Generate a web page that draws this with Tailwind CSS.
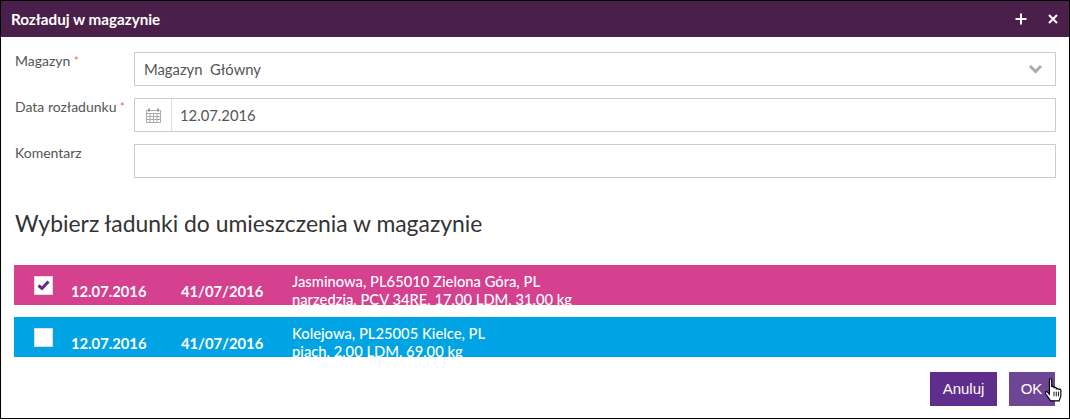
<!DOCTYPE html>
<html lang="pl">
<head>
  <meta charset="UTF-8">
  <title>Rozładuj w magazynie</title>
  <script src="https://cdn.jsdelivr.net/npm/@tailwindcss/browser@4"></script>
</head>
<body class="bg-white overflow-hidden">
  <div class="relative w-[1070px] h-[419px] border border-black font-['Lato',sans-serif] text-[#555] bg-white overflow-hidden">
    <!-- Naglowek -->
    <div class="h-9 bg-[#4a1f4a] flex items-center justify-between pl-[10px] pr-[11px] text-white">
      <h1 class="text-[15.200px] font-bold">Rozładuj w magazynie</h1>
      <div class="flex items-center gap-[21px]">
        <svg width="12" height="12" viewBox="0 0 12 12"><path d="M6 0.500v11M0.500 6h11" stroke="#fff" stroke-width="2"/></svg>
        <svg width="10" height="10" viewBox="0 0 10 10"><path d="M1 1l8 8M9 1l-8 8" stroke="#fff" stroke-width="2"/></svg>
      </div>
    </div>

    <!-- Formularz -->
    <div class="pl-[13px] pr-[13px] pt-[15px]">
      <div class="flex h-[34px]">
        <label class="w-[120px] pl-[1px] text-sm leading-4 pt-[1px]">Magazyn <span class="text-[#f55] text-[11px] align-top">*</span></label>
        <div class="flex-1 border border-[#ccc] flex items-center justify-between pl-[9px] pr-[12px] text-[14.800px]">
          <span class="whitespace-pre">Magazyn  Główny</span>
          <svg width="15" height="10" viewBox="0 0 15 10"><path d="M2 2l5.500 5.500L13 2" fill="none" stroke="#aaa" stroke-width="3"/></svg>
        </div>
      </div>
      <div class="flex h-[34px] mt-[12px]">
        <label class="w-[120px] pl-[1px] text-sm leading-4 pt-[1px] whitespace-nowrap">Data rozładunku <span class="text-[#f55] text-[11px] align-top">*</span></label>
        <div class="flex-1 border border-[#ccc] flex items-center text-[14.800px]">
          <div class="w-[37px] h-full border-r border-[#ddd] flex items-center justify-center">
            <svg width="15" height="15" viewBox="0 0 15 15"><path d="M0.500 2.500h14v12h-14zM0.500 5.500h14M0.500 8.500h14M0.500 11.500h14M4 5.500v9M7.500 5.500v9M11 5.500v9" fill="none" stroke="#aaa"/><path d="M3 0.500v3M12 0.500v3" stroke="#999" stroke-width="2"/></svg>
          </div>
          <span class="pl-[8px] text-[#555]">12.07.2016</span>
        </div>
      </div>
      <div class="flex h-[34px] mt-[12px]">
        <label class="w-[120px] pl-[1px] text-sm leading-4 pt-[1px]">Komentarz</label>
        <div class="flex-1 border border-[#ccc]"></div>
      </div>

      <h2 class="text-[22.900px] pl-[1px] leading-7 text-[#333] mt-[31px]">Wybierz ładunki do umieszczenia w magazynie</h2>

      <!-- Lista ladunkow -->
      <div class="mt-[28px] flex flex-col gap-3 text-white text-[14.750px]">
        <div class="h-10 bg-[#d5408f] flex overflow-hidden">
          <div class="w-[57px] pl-[20px] pt-[11px]">
            <div class="w-[19px] h-[19px] bg-white border border-[#ddd] flex items-center justify-center">
              <svg width="13" height="11" viewBox="0 0 13 11"><path d="M1.500 5.500l3.500 3 6.500-7" fill="none" stroke="#5f2d8c" stroke-width="3"/></svg>
            </div>
          </div>
          <div class="w-[110px] pt-[17px] font-bold leading-[18px]">12.07.2016</div>
          <div class="w-[111px] pt-[17px] font-bold leading-[18px]">41/07/2016</div>
          <div class="pt-[7px] leading-[18px] font-medium">
            <div>Jasminowa, PL65010 Zielona Góra, PL</div>
            <div>narzedzia, PCV 34RE, 17,00 LDM, 31,00 kg</div>
          </div>
        </div>
        <div class="h-10 bg-[#00a4e4] flex overflow-hidden">
          <div class="w-[57px] pl-[20px] pt-[11px]">
            <div class="w-[19px] h-[19px] bg-white border border-[#ddd]"></div>
          </div>
          <div class="w-[110px] pt-[17px] font-bold leading-[18px]">12.07.2016</div>
          <div class="w-[111px] pt-[17px] font-bold leading-[18px]">41/07/2016</div>
          <div class="pt-[7px] leading-[18px] font-medium">
            <div>Kolejowa, PL25005 Kielce, PL</div>
            <div>piach, 2,00 LDM, 69,00 kg</div>
          </div>
        </div>
      </div>

      <!-- Przyciski -->
      <div class="flex justify-end gap-3 mt-[15px] pr-[1px] text-[15px] font-['Liberation_Sans',sans-serif] text-white">
        <button class="w-[67px] h-[34px] bg-[#5f2d8c]">Anuluj</button>
        <button class="w-[46px] h-[34px] bg-[#6f4596] pr-[1px]">OK</button>
      </div>
    </div>

    <!-- Kursor -->
    <svg class="absolute left-[1044px] top-[377px]" width="18" height="24" viewBox="0 0 15 21">
      <path d="M3.500 1.500c0-1.300 2-1.300 2 0v6.500c0-1 2-1 2 0v1c0-1 2-1 2 0v1c0-1 2-.8 2 .2v0c0-.8 2-.6 2 .5v4.300c0 2-1 3-1.500 5h-7.500c-1-2-3-4-4.500-6.500-.6-1.200 1-2.200 2-1l1.500 1.700z" fill="#fff" stroke="#000" stroke-width="1"/>
      <path d="M7.500 12v4M9.500 12v4M11.500 12v4" stroke="#000" stroke-width="0.800"/>
    </svg>
  </div>
</body>
</html>
